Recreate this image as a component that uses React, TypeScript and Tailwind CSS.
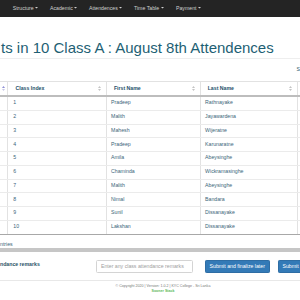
import React from "react";

const rows: [string, string, string][] = [
  ["1", "Pradeep", "Rathnayake"],
  ["2", "Malith", "Jayawardena"],
  ["3", "Mahesh", "Wijeratne"],
  ["4", "Pradeep", "Karunaratne"],
  ["5", "Amila", "Abeysinghe"],
  ["6", "Chaminda", "Wickramasinghe"],
  ["7", "Malith", "Abeysinghe"],
  ["8", "Nimal", "Bandara"],
  ["9", "Sunil", "Dissanayake"],
  ["10", "Lakshan", "Dissanayake"],
];

function Caret() {
  return (
    <svg width="3" height="2" viewBox="0 0 3 2" className="shrink-0">
      <path d="M0 0 L3 0 L1.5 1.6 Z" fill="#cfcfcf" />
    </svg>
  );
}

function SortBoth({ active = false }: { active?: boolean }) {
  return (
    <svg width="3" height="5" viewBox="0 0 3 5" className="shrink-0">
      <path d="M1.5 0 L3 2 L0 2 Z" fill={active ? "#8f8fd6" : "#c4c4c4"} />
      <path d="M0 3 L3 3 L1.5 5 Z" fill={active ? "#c9c9e8" : "#c4c4c4"} />
    </svg>
  );
}

const cols = "grid grid-cols-[8.3px_98.4px_94px_97px_60px]";

export default function App() {
  return (
    <div className="w-[300px] h-[300px] overflow-hidden bg-white font-['Liberation_Sans',Arial,sans-serif]">
      {/* navbar */}
      <div className="h-[17px] bg-[#242424] flex items-center text-[5.2px] text-[#d0d0d0] whitespace-nowrap">
        <span className="ml-[12.7px] w-[37.3px] flex items-center gap-[1.5px] shrink-0">Structure <Caret /></span>
        <span className="w-[39px] flex items-center gap-[1.5px] shrink-0">Academic <Caret /></span>
        <span className="w-[45px] flex items-center gap-[1.5px] shrink-0">Attendences <Caret /></span>
        <span className="w-[42px] flex items-center gap-[1.5px] shrink-0">Time Table <Caret /></span>
        <span className="flex items-center gap-[1.5px] shrink-0">Payment <Caret /></span>
      </div>

      {/* title */}
      <div className="mt-[22px] h-[20px] border-b border-[#eeeeee]">
        <div className="pl-[1px] text-[15px] leading-[18px] text-[#1e5f74] whitespace-nowrap">
          ts in 10 Class A : August 8th Attendences
        </div>
      </div>

      {/* search row */}
      <div className="h-[22px] flex items-center pl-[296.5px] text-[5.2px] text-[#2b5468] whitespace-nowrap">
        S
      </div>

      {/* table */}
      <div className="w-[360px] text-[5.2px] whitespace-nowrap">
        <div className={`${cols} h-[16px] border-t border-[#e2e2e2] border-b-2 border-b-[#bdbdbd] font-bold text-[#24506a]`}>
          <div className="border-r border-[#e2e2e2] flex items-center pl-[2px]">
            <SortBoth active />
          </div>
          <div className="border-r border-[#e2e2e2] flex items-center justify-between pl-[7.2px] pr-[5px]">
            <span>Class Index</span>
            <SortBoth />
          </div>
          <div className="border-r border-[#e2e2e2] flex items-center justify-between pl-[7.2px] pr-[5px]">
            <span>First Name</span>
            <SortBoth />
          </div>
          <div className="border-r border-[#e2e2e2] flex items-center justify-between pl-[7px] pr-[5px]">
            <span>Last Name</span>
            <SortBoth />
          </div>
          <div />
        </div>
        {rows.map((r, i) => (
          <div
            key={r[0]}
            className={`${cols} h-[13.75px] border-b ${i === rows.length - 1 ? "border-[#a8a8a8]" : "border-[#ebebeb]"} text-[#3a6579]`}
          >
            <div className="border-r border-[#e2e2e2]" />
            <div className="border-r border-[#e2e2e2] flex items-center pl-[5px]">{r[0]}</div>
            <div className="border-r border-[#e2e2e2] flex items-center pl-[4.4px]">{r[1]}</div>
            <div className="border-r border-[#e2e2e2] flex items-center pl-[4.4px]">{r[2]}</div>
            <div />
          </div>
        ))}
      </div>

      {/* info */}
      <div className="h-[13.5px] pt-[6px] leading-[6px] text-[5.2px] text-[#3a6579] whitespace-nowrap">ntries</div>

      {/* scrollbar */}
      <div className="h-[4px] bg-[#c6c6c6]" />

      {/* remarks */}
      <div className="h-[28px] flex items-start pt-[8px] text-[5.2px] whitespace-nowrap">
        <div className="w-[96px] shrink-0 pt-[1px] leading-[6px] font-bold text-[#2b5468]">ndance remarks</div>
        <div className="w-[97px] h-[13px] shrink-0 border border-[#d4d4d4] rounded-[1.5px] flex items-center pl-[4px] text-[#a0a0a0]">
          Enter any class attendance remarks
        </div>
        <div className="ml-[12px] w-[64.5px] h-[13px] shrink-0 rounded-[1.3px] bg-[#337ab7] border border-[#2e6da4] flex items-center justify-center text-white">
          Submit and finalize later
        </div>
        <div className="ml-[8px] w-[30px] h-[13px] shrink-0 rounded-[1.3px] bg-[#337ab7] border border-[#2e6da4] flex items-center pl-[4px] text-white">
          Submit
        </div>
      </div>

      {/* footer */}
      <div className="border-t border-[#e8e8e8] w-[326px] pt-[3px] text-center whitespace-nowrap">
        <div className="text-[3.6px] leading-[5px] text-[#777777]">
          © Copyright 2020 | Version: 1.0.2 | KYC College - Sri Lanka
        </div>
        <div className="text-[3.6px] leading-[5px] font-bold text-[#5cb85c]">Sooner Stack</div>
      </div>
    </div>
  );
}
